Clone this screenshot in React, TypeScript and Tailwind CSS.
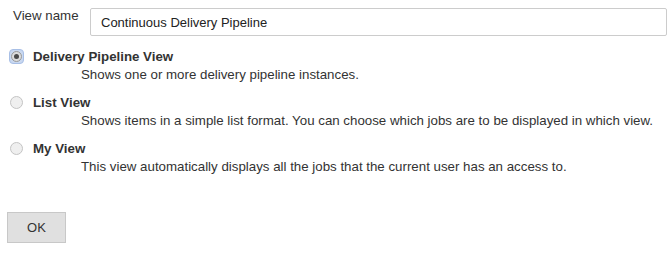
import React, { useState } from 'react';

const VIEW_TYPES = [
  {
    key: 'delivery',
    label: 'Delivery Pipeline View',
    description: 'Shows one or more delivery pipeline instances.',
  },
  {
    key: 'list',
    label: 'List View',
    description: 'Shows items in a simple list format. You can choose which jobs are to be displayed in which view.',
  },
  {
    key: 'my',
    label: 'My View',
    description: 'This view automatically displays all the jobs that the current user has an access to.',
  },
];

const App: React.FC = () => {
  const [name, setName] = useState('Continuous Delivery Pipeline');
  const [viewType, setViewType] = useState('delivery');

  return (
    <div className="w-[668px] h-[253px] bg-white text-[#333] text-[13.3px] font-['Liberation_Sans',Arial,sans-serif] overflow-hidden">
      <div className="flex items-start pt-[8px]">
        <label className="pl-[13px] w-[90px] leading-[15px]">View name</label>
        <input
          type="text"
          value={name}
          onChange={(e) => setName(e.target.value)}
          className="w-[577px] h-[28px] border border-[#ccc] rounded-[2px] px-[10px] text-[13px] text-[#222] bg-white focus:outline-none"
        />
      </div>

      <div className="mt-[12px] flex flex-col gap-[12px]">
        {VIEW_TYPES.map((vt) => (
          <div key={vt.key}>
            <label className="flex items-center h-[16px] cursor-pointer" onClick={() => setViewType(vt.key)}>
              <span className="w-[33px] flex justify-center">
                {viewType === vt.key ? (
                  <span className="w-[15px] h-[15px] rounded-[4px] bg-[#c9d8f0] border border-[#a8bfe6] flex items-center justify-center">
                    <span className="w-[11px] h-[11px] rounded-full bg-[#dcdcdc] border border-[#9a9a9a] flex items-center justify-center">
                      <span className="w-[5px] h-[5px] rounded-full bg-[#4a4a4a]" />
                    </span>
                  </span>
                ) : (
                  <span className="w-[13px] h-[13px] rounded-full border border-[#c4c4c4] bg-[#efefef]" />
                )}
              </span>
              <span className="font-bold leading-[15px]">{vt.label}</span>
            </label>
            <div className="pl-[81px] mt-[3px] leading-[15px]">{vt.description}</div>
          </div>
        ))}
      </div>

      <div className="pl-[7px] mt-[38px]">
        <button
          type="button"
          className="w-[59px] h-[31px] bg-[#e0e0e0] border border-[#c8c8c8] text-[#333] text-[13px]"
        >
          OK
        </button>
      </div>
    </div>
  );
};

export default App;
